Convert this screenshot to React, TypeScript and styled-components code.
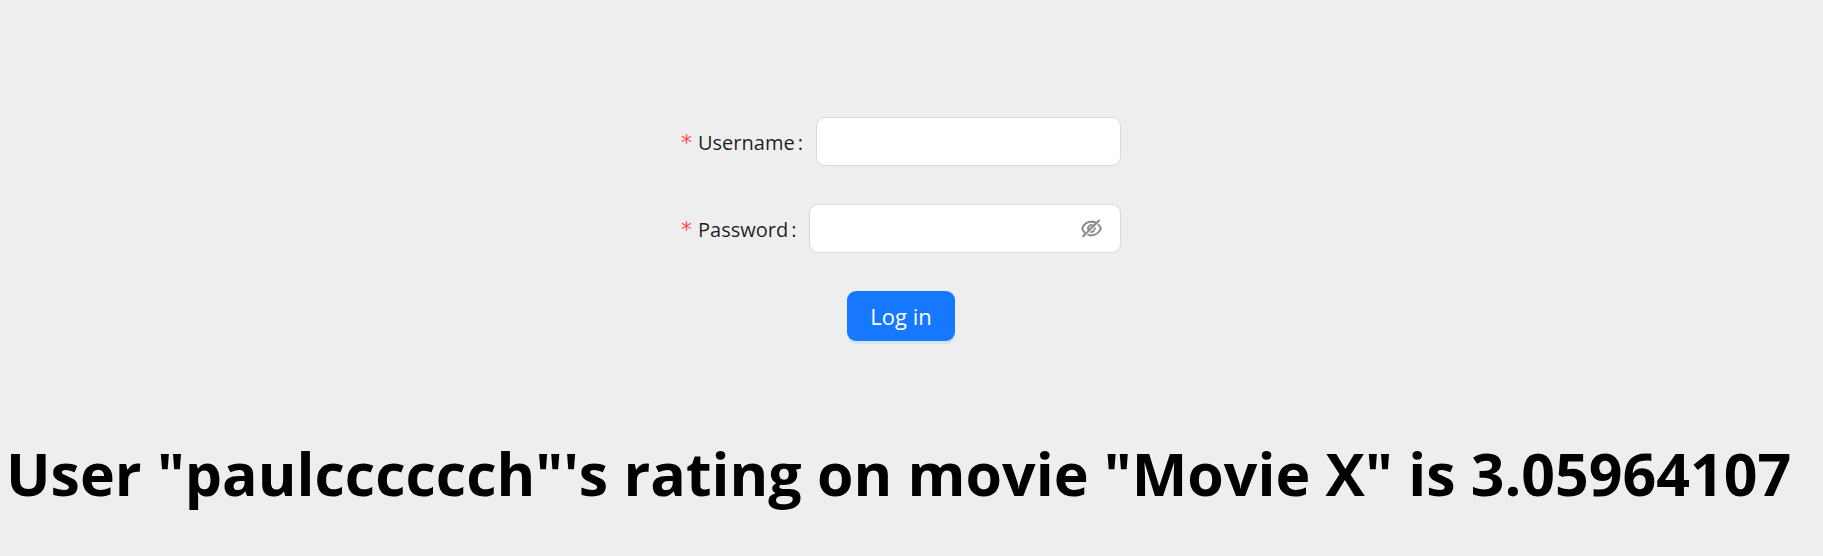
import React, { useState } from "react";
import styled, { createGlobalStyle } from "styled-components";

const GlobalStyle = createGlobalStyle`
  *, *::before, *::after { box-sizing: border-box; }
  body {
    margin: 0;
    background: #eeeeee;
    color: #000;
    font-family: "Segoe UI", "Open Sans", "Noto Sans", sans-serif;
  }
`;

const Page = styled.main`
  display: flex;
  flex-direction: column;
  padding: 117px 21px 0 6px;
`;

const LoginForm = styled.form`
  display: flex;
  flex-direction: column;
  align-items: center;
  gap: 38px;
  padding-right: 6px;
`;

const Field = styled.div`
  display: flex;
  align-items: center;
  width: 440px;
  max-width: 100%;
`;

const FieldLabel = styled.label`
  display: flex;
  align-items: center;
  flex: none;
  margin-right: 13px;
  padding-top: 2px;
  font-size: 20px;
  line-height: 34px;
  color: rgba(0, 0, 0, 0.88);
`;

const Required = styled.span`
  margin-right: 6px;
  color: #ff4d4f;
  font-family: "DejaVu Sans", sans-serif;
  font-size: 22px;
`;

const Colon = styled.span`
  margin-left: 3px;
`;

const InputBox = styled.div`
  display: flex;
  align-items: center;
  flex: 1;
  min-width: 0;
  height: 49px;
  padding: 0 18px;
  border: 1px solid #d9d9d9;
  border-radius: 9px;
  background: #fff;
`;

const TextInput = styled.input`
  flex: 1;
  min-width: 0;
  padding: 0;
  border: 0;
  outline: 0;
  background: transparent;
  font: inherit;
  font-size: 22px;
`;

const EyeButton = styled.button`
  display: flex;
  padding: 0;
  border: 0;
  background: none;
  color: rgba(0, 0, 0, 0.45);
  cursor: pointer;
`;

const SubmitButton = styled.button`
  height: 50px;
  padding: 0 23px;
  border: 0;
  border-radius: 9px;
  background: #1677ff;
  box-shadow: 0 3px 0 rgba(5, 145, 255, 0.1);
  color: #fff;
  font: inherit;
  font-size: 22px;
  line-height: 34px;
  cursor: pointer;
`;

const Result = styled.h1`
  margin: 91px 0 0;
  font-size: 59px;
  line-height: 82px;
  font-weight: 700;
`;

const EyeInvisible = () => (
  <svg width="21" height="21" viewBox="64 64 896 896" fill="currentColor" stroke="currentColor" strokeWidth="12" aria-hidden="true">
    <path d="M942.2 486.2Q889.47 375.11 816.7 305l-50.88 50.88C807.31 395.53 843.45 447.4 874.7 512 791.5 684.2 673.4 766 512 766q-72.67 0-133.87-22.38L323 798.75Q408 838 512 838q288.3 0 430.2-300.3a60.29 60.29 0 000-51.5zm-63.57-320.64L836 122.88a8 8 0 00-11.32 0L715.31 232.2Q624.86 186 512 186q-288.3 0-430.2 300.3a60.3 60.3 0 000 51.5q56.69 119.4 136.5 191.41L112.48 835a8 8 0 000 11.31L155.17 889a8 8 0 0011.31 0l712.15-712.12a8 8 0 000-11.32zM149.3 512C232.6 339.8 350.7 258 512 258c54.54 0 104.13 9.36 149.12 28.39l-70.3 70.3a176 176 0 00-238.13 238.13l-83.42 83.42C223.1 637.49 183.3 582.28 149.3 512zm246.7 0a112.11 112.11 0 01146.2-106.69L401.31 546.2A112 112 0 01396 512z" />
    <path d="M508 624c-3.46 0-6.87-.16-10.25-.47l-52.82 52.82a176.09 176.09 0 00227.42-227.42l-52.82 52.82c.31 3.38.47 6.79.47 10.25a111.94 111.94 0 01-112 112z" />
  </svg>
);

export default function App() {
  const [visible, setVisible] = useState(false);
  return (
    <>
      <GlobalStyle />
      <Page>
        <LoginForm onSubmit={(event) => event.preventDefault()}>
          <Field>
            <FieldLabel htmlFor="username">
              <Required>*</Required>
              Username
              <Colon>:</Colon>
            </FieldLabel>
            <InputBox>
              <TextInput id="username" name="username" type="text" required />
            </InputBox>
          </Field>
          <Field>
            <FieldLabel htmlFor="password">
              <Required>*</Required>
              Password
              <Colon>:</Colon>
            </FieldLabel>
            <InputBox>
              <TextInput id="password" name="password" type={visible ? "text" : "password"} required />
              <EyeButton type="button" aria-label="Toggle password visibility" onClick={() => setVisible(!visible)}>
                <EyeInvisible />
              </EyeButton>
            </InputBox>
          </Field>
          <SubmitButton type="submit">Log in</SubmitButton>
        </LoginForm>
        <Result>User "paulcccccch"'s rating on movie "Movie X" is 3.05964107</Result>
      </Page>
    </>
  );
}
